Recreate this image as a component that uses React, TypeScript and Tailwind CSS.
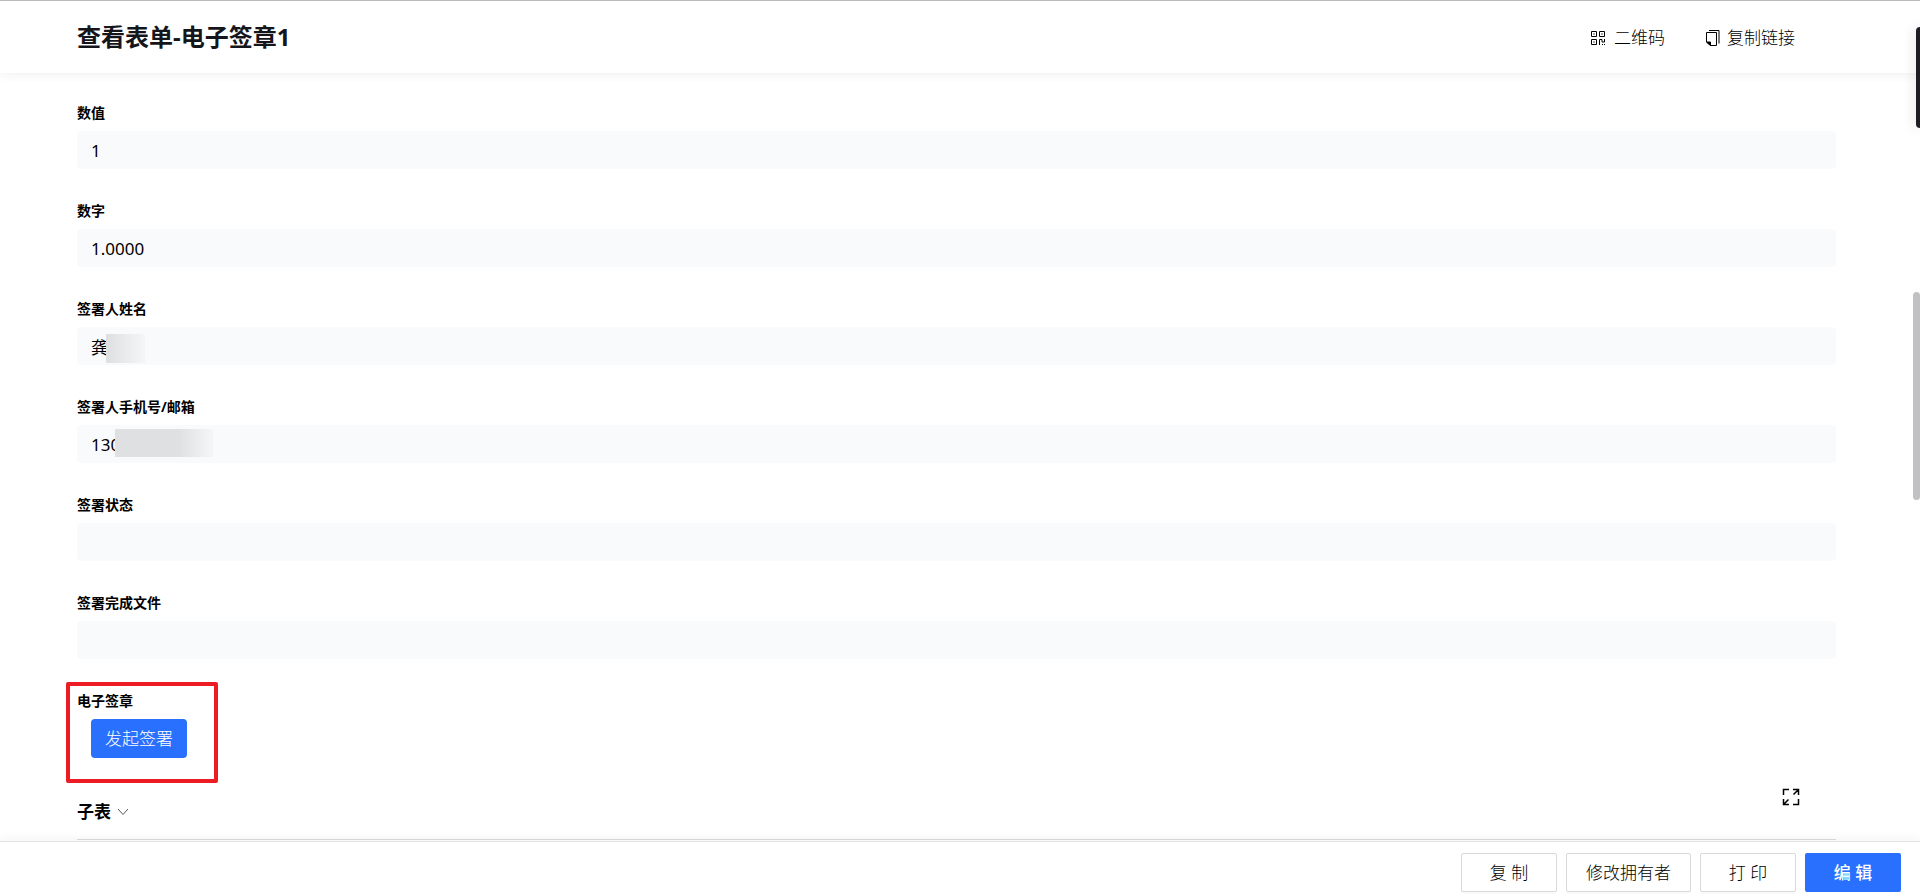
import React from 'react';

interface Field {
  id: string;
  label: string;
  value: string;
  mask?: string;
}

const fields: Field[] = [
  { id: 'value', label: '数值', value: '1' },
  { id: 'number', label: '数字', value: '1.0000' },
  {
    id: 'signer',
    label: '签署人姓名',
    value: '龚',
    mask: 'left-[29px] top-[7px] h-[29px] w-[39px] bg-linear-to-r from-[#dedfe0] to-[#f5f6f8]',
  },
  {
    id: 'contact',
    label: '签署人手机号/邮箱',
    value: '130',
    mask: 'left-[38px] top-1 h-7 w-[98px] bg-linear-to-r from-[#dfe0e2] via-[#dfe0e2] via-65% to-[#f5f6f8]',
  },
  { id: 'status', label: '签署状态', value: '' },
  { id: 'file', label: '签署完成文件', value: '' },
];

const QrIcon: React.FC = () => (
  <svg width="16" height="16" viewBox="0 0 16 16" fill="none" stroke="currentColor" aria-hidden="true">
    <path d="M1.500 1.500h5v5h-5zM9.500 1.500h5v5h-5zM1.500 9.500h5v5h-5z" />
    <path d="M3.300 4h1.400M11.300 4h1.400M3.300 12h1.400M9.500 15V9.500h2.500v2.500h2.500V9M12 14.500h1M14 14.500h1" />
  </svg>
);

const CopyIcon: React.FC = () => (
  <svg width="16" height="18" viewBox="0 0 16 18" fill="none" stroke="currentColor" aria-hidden="true">
    <path d="M4 1.500h10v13" />
    <path d="M1.500 3.500h10v13H5.500l-4-3.500z" />
    <path d="M1.500 13h4v3.500z" fill="currentColor" />
  </svg>
);

const ExpandIcon: React.FC = () => (
  <svg width="18" height="18" viewBox="0 0 18 18" fill="none" stroke="currentColor" strokeWidth="1.500" aria-hidden="true">
    <path d="M1.500 7v-5.500h5.500M11 1.500h5.500v5.500M16.500 1.500l-5 5M1.500 11v5.500h5.500M1.500 16.500l5-5M16.500 11v5.500h-5.500" />
  </svg>
);

const FormField: React.FC<{ field: Field }> = ({ field }) => (
  <div className="flex flex-col gap-2">
    <label htmlFor={field.id} className="text-sm leading-5 font-bold">
      {field.label}
    </label>
    <div className="relative">
      <input
        id={field.id}
        value={field.value}
        readOnly
        className="block h-[38px] w-full rounded bg-[#f9fafc] px-[14px] text-[17px] font-normal outline-none"
      />
      {field.mask && <span className={`absolute ${field.mask}`} />}
    </div>
  </div>
);

const footerButton = 'h-[39px] rounded-xs border border-[#d9d9d9] bg-white text-black shadow-[0_2px_0_rgba(0,0,0,0.02)]';

const App: React.FC = () => {
  return (
    <div className="relative flex h-screen flex-col overflow-hidden bg-white font-['Noto_Sans','Noto_Sans_CJK_SC',sans-serif] text-[17px] font-light text-[#14161c]">
      {/* Header */}
      <header className="z-10 flex h-[73px] shrink-0 items-center justify-between border-t border-[#b9b9b9] bg-white pr-[125px] pl-[77px] shadow-[0_2px_10px_rgba(0,0,0,0.06)]">
        <h1 className="text-2xl font-bold">查看表单-电子签章1</h1>
        <div className="flex items-center gap-10 pt-0.5 text-black">
          <button type="button" className="flex items-center gap-2">
            <QrIcon />
            二维码
          </button>
          <button type="button" className="flex items-center gap-1.5">
            <CopyIcon />
            复制链接
          </button>
        </div>
      </header>

      {/* Form */}
      <main className="min-h-0 flex-1 overflow-hidden pt-[30px] pr-[84px] pl-[77px] text-black">
        <div className="flex flex-col gap-8">
          {fields.map((field) => (
            <FormField key={field.id} field={field} />
          ))}
          <div className="relative flex flex-col items-start gap-2">
            <h2 className="text-sm leading-5 font-bold">电子签章</h2>
            <button type="button" className="ml-[14px] h-[39px] w-24 rounded bg-[#2970ff] text-white">
              发起签署
            </button>
            <div className="pointer-events-none absolute -top-[9px] -left-[11px] h-[101px] w-[152px] rounded-xs border-4 border-[#ed1c24]" />
          </div>
        </div>

        <section className="mt-[30px] flex h-[52px] justify-between border-b border-[#dcdee2] pr-9">
          <button type="button" className="flex h-12 items-center gap-[6px] font-bold">
            子表
            <svg width="12" height="8" viewBox="0 0 12 8" fill="none" stroke="#555" aria-hidden="true">
              <path d="M1 1l5 5.500L11 1" />
            </svg>
          </button>
          <button type="button" aria-label="全屏" className="h-[18px]">
            <ExpandIcon />
          </button>
        </section>
      </main>

      {/* Actions */}
      <footer className="z-10 flex h-[54px] shrink-0 items-start justify-end gap-[9px] border-t border-[#e3e4e6] bg-white pt-[11px] pr-[19px] shadow-[0_-2px_10px_rgba(0,0,0,0.05)]">
        <button type="button" className={`${footerButton} w-24`}>复 制</button>
        <button type="button" className={`${footerButton} w-[125px]`}>修改拥有者</button>
        <button type="button" className={`${footerButton} w-24`}>打 印</button>
        <button type="button" className="h-[39px] w-24 rounded-xs bg-[#2970ff] font-medium text-white">编 辑</button>
      </footer>

      {/* Side handle and scroll thumb */}
      <div className="absolute top-[27px] right-0 z-20 h-[101px] w-1 rounded-l-lg bg-[#1d1e24] shadow-[0_0_14px_rgba(0,0,0,0.2)]" />
      <div className="absolute top-[292px] right-0 h-52 w-[7px] rounded-full bg-[#c1c1c3]" />
    </div>
  );
};

export default App;
